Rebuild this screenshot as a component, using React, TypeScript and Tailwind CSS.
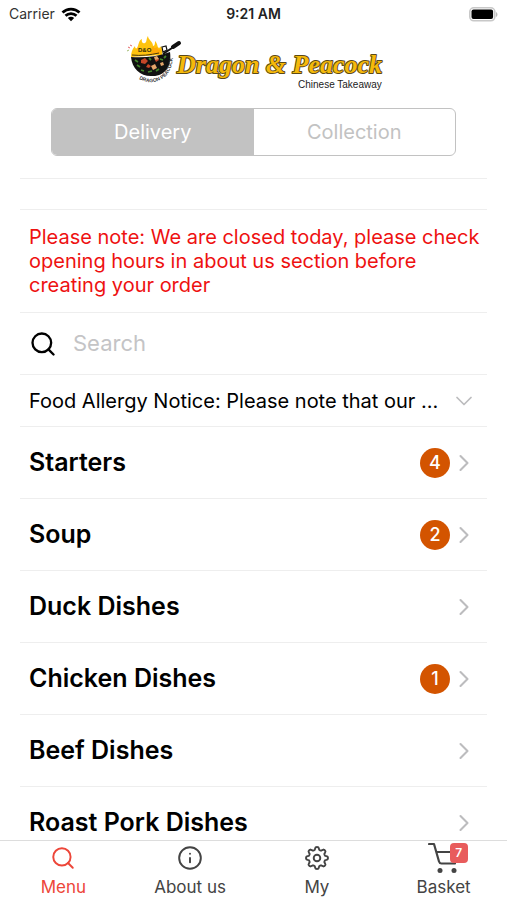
import { ChevronDown, ChevronRight, Info, Search } from "lucide-react";

const categories = [
  { name: "Starters", count: 4 },
  { name: "Soup", count: 2 },
  { name: "Duck Dishes", count: 0 },
  { name: "Chicken Dishes", count: 1 },
  { name: "Beef Dishes", count: 0 },
  { name: "Roast Pork Dishes", count: 0 },
];

function StatusBar() {
  return (
    <div className="grid h-7 shrink-0 grid-cols-3 items-center px-[9px] text-sm leading-4">
      <div className="flex items-center gap-1.5">
        <span className="text-[#333]">Carrier</span>
        <svg width="20" height="15" viewBox="0 0 20 15" fill="none" stroke="#000" strokeWidth="2.8" aria-hidden="true">
          <path d="M1.5 5.6C6.3 1 13.7 1 18.5 5.6" />
          <path d="M4.5 8.8c3.1-3 7.9-3 11 0" />
          <path d="M10 14.2 6.8 11c1.8-1.7 4.6-1.7 6.4 0Z" fill="#000" stroke="none" />
        </svg>
      </div>
      <span className="text-center font-semibold text-[#222]">9:21 AM</span>
      <svg className="justify-self-end" width="29" height="15" viewBox="0 0 29 15" aria-hidden="true">
        <rect x="0.8" y="0.8" width="25" height="13" rx="4" fill="#fff" stroke="#c8c8c8" strokeWidth="1.6" />
        <rect x="2.5" y="2.5" width="21.6" height="9.6" rx="2" fill="#000" />
        <path d="M27 5v5c2-1 2-4 0-5Z" fill="#bbb" />
      </svg>
    </div>
  );
}

function Logo() {
  return (
    <svg className="mx-auto mt-2 block" width="264" height="56" viewBox="122 36 264 56" role="img" aria-label="Dragon & Peacock Chinese Takeaway">
      <path d="M131 57c0-4 1-8 4-11 0 2 1 3 2 2 2-3 1-7 5-9-1 3 1 5 3 4 2-1 1-4 3-7 0 4 5 5 5 10 2 0 2-3 2-5 3 3 2 6 4 7 1-1 2-1 2-2 1 3 2 5 1 9Z" fill="#ffc30e" />
      <path d="M150 54c2-3 1-6 3-8 1 3 3 2 4 1 1 3 2 3 4 2l-1 5Z" fill="#ffa908" />
      <path d="M131 57c12 1 25 0 39-5 2 14-5 24-17 24-12 1-21-7-22-19Z" fill="#111" />
      <path d="m163 54 6-4 9-6" fill="none" stroke="#111" strokeWidth="2" />
      <path d="m173 47 6-4" stroke="#111" strokeWidth="4" strokeLinecap="round" />
      <path d="m162 47 4-1 1 4-4 2Z" fill="#fff" stroke="#111" strokeWidth="1.2" />
      <path d="M132 55c9 1 18 0 27-2" fill="none" stroke="#4a390c" strokeWidth="1" />
      <g fill="#c44628">
        <path d="m141 60 4-2 3 3-3 3-4-1ZM148 64l3 2-2 2-3-1ZM155 60l3-2 1 2-3 2Z" />
      </g>
      <g fill="#e5a66b">
        <path d="m151 66 4-2 2 4-4 2ZM154 57l3-1 2 3-4 1ZM160 63l3-1 1 3-3 1Z" />
      </g>
      <g fill="none" stroke="#42862b" strokeWidth="1.8">
        <path d="m135 60 3 2M137 65l3 2M141 70l3 1M148 72l4-1M156 71l3-2M149 58l2 2M160 59l3 1M164 58l2-2" />
      </g>
      <path d="m128 47 2 1M130 45l2 1" stroke="#e66565" strokeWidth="1" />
      <path d="m127 51 2-1" stroke="#a2bb71" strokeWidth="1" />
      <path id="bowl-curve" d="M139 79c14 8 33 1 34-22" fill="none" />
      <text fontFamily="Liberation Sans, sans-serif" fontSize="5" fontWeight="700" fill="#333">
        <textPath href="#bowl-curve">DRAGON PEACOCK</textPath>
      </text>
      <text x="138" y="52" fontFamily="Liberation Sans, sans-serif" fontSize="6" fontWeight="700" fill="#332b08">D&amp;O</text>
      <text x="177" y="73" fontFamily="Liberation Serif, serif" fontSize="26" fontWeight="700" fontStyle="italic" fill="#f5b90b" stroke="#5c4a16" strokeWidth="2" strokeLinejoin="round" paintOrder="stroke">
        Dragon &amp; Peacock
      </text>
      <text x="298" y="88" fontFamily="Liberation Sans, sans-serif" fontSize="10" fill="#222">Chinese Takeaway</text>
    </svg>
  );
}

const gearOutline =
  Array.from({ length: 96 }, (_, i) => {
    const angle = (i / 96) * Math.PI * 2;
    const radius = 9.6 + 1.4 * Math.tanh(2 * Math.cos(8 * angle));
    return `${i === 0 ? "M" : "L"}${13 + radius * Math.sin(angle)} ${13 - radius * Math.cos(angle)}`;
  }).join("") + "Z";

function GearIcon() {
  return (
    <svg width="26" height="26" viewBox="0 0 26 26" fill="none" stroke="currentColor" strokeWidth="1.9" strokeLinejoin="round" aria-hidden="true">
      <path d={gearOutline} />
      <circle cx="13" cy="13" r="3.3" />
    </svg>
  );
}

function CartIcon() {
  return (
    <svg width="32" height="32" viewBox="0 0 32 32" fill="none" stroke="currentColor" strokeWidth="2.2" strokeLinecap="round" strokeLinejoin="round" aria-hidden="true">
      <path d="M1 2h5l5 17.500q.6 2 2.500 2H27M8.500 10H29l-2 9" />
      <circle cx="12" cy="28.500" r="2.500" fill="currentColor" stroke="none" />
      <circle cx="26" cy="28.500" r="2.500" fill="currentColor" stroke="none" />
    </svg>
  );
}

const tabStyle = "flex flex-col items-center text-[17px] leading-6";

export default function App() {
  return (
    <div className="flex h-screen flex-col bg-white font-['Inter',sans-serif] text-black">
      <StatusBar />
      <main className="min-h-0 flex-1 overflow-y-auto [scrollbar-width:none]">
        <h1><Logo /></h1>
        <div className="mx-[51px] mt-4 grid h-12 grid-cols-2 overflow-hidden rounded-md border border-[#c2c2c2] text-xl">
          <button type="button" aria-pressed="true" className="bg-[#c2c2c2] text-white">Delivery</button>
          <button type="button" aria-pressed="false" className="text-[#c2c2c2]">Collection</button>
        </div>
        <div className="mx-5 mt-[22px] divide-y divide-[#eeeeee] border-t border-[#eeeeee]">
          <div className="h-[31px]" />
          <p className="py-[15px] pl-[9px] text-xl leading-6 text-[#ee1111]">
            Please note: We are closed today, please check opening hours in about us section before creating your order
          </p>
          <label className="flex h-[62px] items-center gap-4 px-[9px]">
            <Search size={28} strokeWidth={2} aria-hidden="true" />
            <input type="text" aria-label="Search" placeholder="Search" className="min-w-0 flex-1 bg-transparent text-[22px] outline-none placeholder:text-[#c4c4c6]" />
          </label>
          <button type="button" className="flex h-[52px] w-full items-center px-[9px] text-left text-xl">
            <span className="flex-1 whitespace-nowrap">Food Allergy Notice: Please note that our ...</span>
            <ChevronDown size={28} strokeWidth={1.5} className="shrink-0 text-[#bcbcbe]" aria-hidden="true" />
          </button>
          <ul className="divide-y divide-[#eeeeee] pb-4">
            {categories.map(({ name, count }) => (
              <li key={name}>
                <button type="button" className="flex h-[71px] w-full items-center px-[9px] text-left">
                  <span className="flex-1 text-[25px] font-semibold">{name}</span>
                  {count > 0 && (
                    <span className="grid size-[30px] place-items-center rounded-full bg-[#d35400] text-lg font-medium text-white">{count}</span>
                  )}
                  <ChevronRight size={28} strokeWidth={1.8} className="text-[#bcbcbe]" aria-hidden="true" />
                </button>
              </li>
            ))}
          </ul>
        </div>
      </main>
      <nav className="grid h-[60px] shrink-0 grid-cols-4 border-t border-[#dddddd] bg-white text-[#444]">
        <button type="button" aria-current="page" className={`${tabStyle} text-[#ed4639]`}>
          <span className="grid h-[34px] place-items-center"><Search size={26} strokeWidth={1.8} /></span>
          Menu
        </button>
        <button type="button" className={tabStyle}>
          <span className="grid h-[34px] place-items-center"><Info size={26} strokeWidth={1.8} /></span>
          About us
        </button>
        <button type="button" className={tabStyle}>
          <span className="grid h-[34px] place-items-center"><GearIcon /></span>
          My
        </button>
        <button type="button" className={tabStyle}>
          <span className="relative grid h-[34px] place-items-center">
            <CartIcon />
            <span className="absolute top-0.5 -right-2 grid h-5 w-[18px] place-items-center rounded-sm bg-[#e85c5c] text-xs font-semibold text-white">7</span>
          </span>
          Basket
        </button>
      </nav>
    </div>
  );
}
